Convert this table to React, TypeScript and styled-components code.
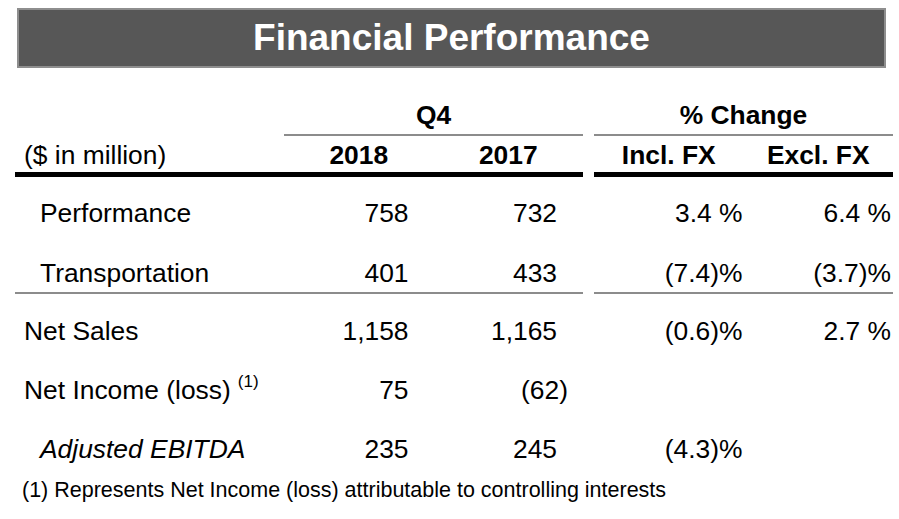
import styled, { createGlobalStyle } from "styled-components";

const GlobalStyle = createGlobalStyle`
  html, body {
    margin: 0;
    padding: 0;
    background: #FFFFFF;
  }
  body {
    font-family: "Liberation Sans", Arial, sans-serif;
    color: #000000;
  }
`;

const Page = styled.div`
  width: 899px;
  height: 519px;
  padding: 8px 0 0 15px;
  box-sizing: border-box;
  overflow: hidden;
`;

const TitleBar = styled.div`
  margin-left: 2px;
  width: 869px;
  height: 60px;
  box-sizing: border-box;
  background: #575757;
  border: 2px solid #8e8e8e;
  display: flex;
  align-items: center;
  justify-content: center;
  color: #FFFFFF;
  font-size: 37px;
  font-weight: bold;
`;

const Table = styled.div`
  margin-top: 28px;
  width: 878px;
`;

const Row = styled.div<{ $top: number; $bottom: number }>`
  display: grid;
  grid-template-columns: 269px 149.5px 149.5px 11px 149.5px 149.5px;
  font-size: 26.4px;
  line-height: 30px;
  & > * {
    padding-top: ${(p) => p.$top}px;
    padding-bottom: ${(p) => p.$bottom}px;
  }
`;

const Cell = styled.div<{ $line?: "grey" | "black"; $span?: number }>`
  grid-column: span ${(p) => p.$span || 1};
  border-bottom: ${(p) =>
    p.$line === "grey"
      ? "2px solid #8c8c8c"
      : p.$line === "black"
      ? "5px solid #000000"
      : "none"};
`;

const GroupHead = styled(Cell)`
  font-weight: bold;
  text-align: center;
`;

const ColHead = styled(Cell)`
  font-weight: bold;
  text-align: center;
`;

const Label = styled(Cell)<{ $indent?: boolean; $italic?: boolean }>`
  padding-left: ${(p) => (p.$indent ? 25 : 9)}px;
  font-style: ${(p) => (p.$italic ? "italic" : "normal")};
  white-space: nowrap;
`;

const Num = styled(Cell)<{ $pad: number }>`
  text-align: right;
  padding-right: ${(p) => p.$pad}px;
  white-space: nowrap;
`;

const Sup = styled.sup`
  font-size: 17px;
  line-height: 0;
  margin-left: 7px;
  vertical-align: 12px;
`;

const Footnote = styled.div`
  margin-top: 6px;
  padding-left: 7px;
  font-size: 21.5px;
  line-height: 26px;
  white-space: nowrap;
`;

type DataRow = {
  label: string;
  indent?: boolean;
  italic?: boolean;
  note?: string;
  a: string;
  b: string;
  c: string;
  d: string;
  bHang?: boolean;
  top: number;
  bottom: number;
  line?: "grey";
};

const rows: DataRow[] = [
  { label: "Performance", indent: true, a: "758", b: "732", c: "3.4 %", d: "6.4 %", top: 21, bottom: 15 },
  { label: "Transportation", indent: true, a: "401", b: "433", c: "(7.4)%", d: "(3.7)%", top: 15, bottom: 4, line: "grey" },
  { label: "Net Sales", a: "1,158", b: "1,165", c: "(0.6)%", d: "2.7 %", top: 22, bottom: 7 },
  { label: "Net Income (loss)", note: "(1)", a: "75", b: "(62)", bHang: true, c: "", d: "", top: 22, bottom: 7 },
  { label: "Adjusted EBITDA", indent: true, italic: true, a: "235", b: "245", c: "(4.3)%", d: "", top: 22, bottom: 7 },
];

export default function App() {
  return (
    <>
      <GlobalStyle />
      <Page>
        <TitleBar>Financial Performance</TitleBar>
        <Table>
          <Row $top={4} $bottom={4}>
            <Cell />
            <GroupHead $span={2} $line="grey">Q4</GroupHead>
            <Cell />
            <GroupHead $span={2} $line="grey">% Change</GroupHead>
          </Row>
          <Row $top={4} $bottom={2}>
            <Label $line="black">($ in million)</Label>
            <ColHead $line="black">2018</ColHead>
            <ColHead $line="black">2017</ColHead>
            <Cell />
            <ColHead $line="black">Incl. FX</ColHead>
            <ColHead $line="black">Excl. FX</ColHead>
          </Row>
          {rows.map((r) => (
            <Row key={r.label} $top={r.top} $bottom={r.bottom}>
              <Label $indent={r.indent} $italic={r.italic} $line={r.line}>
                {r.label}
                {r.note && <Sup>{r.note}</Sup>}
              </Label>
              <Num $pad={25} $line={r.line}>{r.a}</Num>
              <Num $pad={r.bHang ? 15 : 26} $line={r.line}>{r.b}</Num>
              <Cell />
              <Num $pad={1} $line={r.line}>{r.c}</Num>
              <Num $pad={2} $line={r.line}>{r.d}</Num>
            </Row>
          ))}
        </Table>
        <Footnote>(1) Represents Net Income (loss) attributable to controlling interests</Footnote>
      </Page>
    </>
  );
}
